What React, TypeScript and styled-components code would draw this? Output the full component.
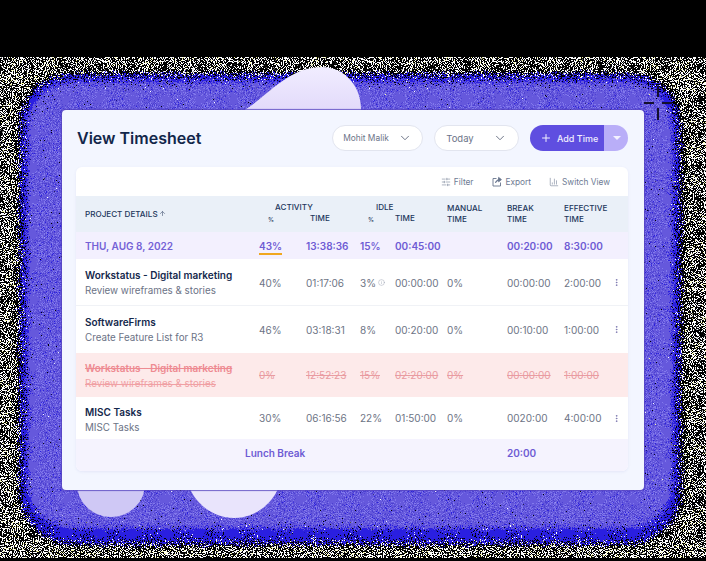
import styled, { createGlobalStyle } from "styled-components";
import { Plus, ChevronDown, SlidersHorizontal, ChartColumn, ArrowUp, Info, EllipsisVertical } from "lucide-react";

const GlobalStyle = createGlobalStyle`
  html, body {
    margin: 0;
    padding: 0;
    background: #000;
    font-family: Inter, "Noto Sans", sans-serif;
  }
`;

interface RowData {
  title: string;
  sub: string;
  values: string[];
  info?: boolean;
  removed?: boolean;
  height: number;
  nudge?: number;
}

const rows: RowData[] = [
  {
    title: "Workstatus - Digital marketing",
    sub: "Review wireframes & stories",
    values: ["40%", "01:17:06", "3%", "00:00:00", "0%", "00:00:00", "2:00:00"],
    info: true,
    height: 47,
    nudge: 1,
  },
  {
    title: "SoftwareFirms",
    sub: "Create Feature List for R3",
    values: ["46%", "03:18:31", "8%", "00:20:00", "0%", "00:10:00", "1:00:00"],
    height: 47,
    nudge: 1,
  },
  {
    title: "Workstatus - Digital marketing",
    sub: "Review wireframes & stories",
    values: ["0%", "12:52:23", "15%", "02:20:00", "0%", "00:00:00", "1:00:00"],
    removed: true,
    height: 44,
    nudge: 1,
  },
  {
    title: "MISC Tasks",
    sub: "MISC Tasks",
    values: ["30%", "06:16:56", "22%", "01:50:00", "0%", "0020:00", "4:00:00"],
    height: 42,
    nudge: 4,
  },
];

// thresholded noise: offset -1 keeps about half the pixels where the shape is solid
function Dither({ id, blur, gain = 1, offset, color, seed }: { id: string; blur: number; gain?: number; offset: number; color: string; seed: number }) {
  return (
    <filter id={id} x="-20%" y="-20%" width="140%" height="140%" colorInterpolationFilters="sRGB">
      <feGaussianBlur in="SourceAlpha" stdDeviation={blur} result="soft" />
      <feTurbulence type="fractalNoise" baseFrequency="0.97" numOctaves="2" seed={seed} result="noise" />
      <feComposite in="soft" in2="noise" operator="arithmetic" k1="0" k2={gain} k3="1" k4={offset} result="mix" />
      <feComponentTransfer in="mix" result="hard">
        <feFuncA type="linear" slope="60" intercept="-30" />
      </feComponentTransfer>
      <feFlood floodColor={color} />
      <feComposite in2="hard" operator="in" />
    </filter>
  );
}

function Backdrop() {
  return (
    <BackdropSvg viewBox="0 0 706 561">
      <defs>
        <Dither id="whiteSpeck" blur={0.01} offset={-1.02} color="#ffffff" seed={4} />
        <Dither id="yellowSpeck" blur={0.01} offset={-1.2} color="#f6f7a0" seed={11} />
        <Dither id="blackGap" blur={10} offset={-0.92} color="#000000" seed={21} />
        <Dither id="blueSpeck" blur={7} offset={-0.86} color="#2a1fe0" seed={7} />
        <Dither id="purpleFill" blur={7} offset={-0.8} color="#6558dc" seed={9} />
        <Dither id="lightGrain" blur={3} offset={-1.08} color="#8279ec" seed={15} />
        <Dither id="darkGrain" blur={3} offset={-1.1} color="#4c40d2" seed={17} />
        <linearGradient id="blobTop" x1="0" y1="0" x2="0" y2="1">
          <stop offset="0" stopColor="#f1edff" />
          <stop offset="1" stopColor="#e2dafa" />
        </linearGradient>
      </defs>
      <rect x="-40" y="57" width="790" height="501" fill="#fff" filter="url(#whiteSpeck)" />
      <rect x="-40" y="57" width="790" height="501" fill="#fff" filter="url(#yellowSpeck)" />
      <rect x="6" y="62" width="690" height="494" rx="66" fill="#000" filter="url(#blackGap)" />
      <rect x="14" y="68" width="672" height="482" rx="58" fill="#000" filter="url(#blueSpeck)" />
      <rect x="22" y="76" width="656" height="458" rx="50" fill="#000" filter="url(#purpleFill)" />
      <rect x="26" y="80" width="648" height="450" rx="46" fill="#000" filter="url(#lightGrain)" />
      <rect x="26" y="80" width="648" height="450" rx="46" fill="#000" filter="url(#darkGrain)" />
      <path d="M243 111C268 96 288 67 322 67C346 67 362 88 361 111Z" fill="url(#blobTop)" />
      <ellipse cx="111" cy="484" rx="34" ry="33" fill="#cfc8f5" />
      <ellipse cx="234" cy="466" rx="49" ry="52" fill="#e9e4fc" />
      <path d="M644 103H654M662 103H672M658 86V97M658 108V120" stroke="#14102e" strokeWidth="2" fill="none" />
    </BackdropSvg>
  );
}

function ExportIcon() {
  return (
    <svg width="11" height="11" viewBox="0 0 11 11" fill="none" stroke="#66748c" strokeWidth="0.9">
      <path d="M4.5 2.5H1V10H8.5V6.5" />
      <path d="M3.5 7C3.8 4.8 5.4 3.6 7.6 3.6M6.6 1.4L9.4 3.6L6.6 5.8Z" fill="#66748c" />
    </svg>
  );
}

export default function App() {
  return (
    <Page>
      <GlobalStyle />
      <Backdrop />
      <Card>
        <CardHeader>
          <Title>View Timesheet</Title>
          <Select $width={91} $size={8.4} $gap={9}>
            Mohit Malik
            <ChevronDown size={14} strokeWidth={1.5} />
          </Select>
          <Select $width={85} $size={9.5} $gap={19}>
            Today
            <ChevronDown size={14} strokeWidth={1.5} />
          </Select>
          <AddButton>
            <AddMain>
              <Plus size={12} strokeWidth={2} />
              Add Time
            </AddMain>
            <AddCaret>
              <Caret />
            </AddCaret>
          </AddButton>
        </CardHeader>
        <Panel>
          <Toolbar>
            <ToolItem>
              <SlidersHorizontal size={10} strokeWidth={1.3} />
              Filter
            </ToolItem>
            <ToolItem>
              <ExportIcon />
              Export
            </ToolItem>
            <ToolItem>
              <ChartColumn size={10} strokeWidth={1.3} />
              Switch View
            </ToolItem>
          </Toolbar>

          <HeadRow>
            <HeadCell>
              PROJECT DETAILS
              <ArrowUp size={7} strokeWidth={2.4} />
            </HeadCell>
            <HeadGroup>
              <GroupLabel $inset={16}>ACTIVITY</GroupLabel>
              <TinyLabel $inset={9}>%</TinyLabel>
              <SubLabel $inset={4}>TIME</SubLabel>
            </HeadGroup>
            <HeadGroup>
              <GroupLabel $inset={16}>IDLE</GroupLabel>
              <TinyLabel $inset={8}>%</TinyLabel>
              <SubLabel $inset={0}>TIME</SubLabel>
            </HeadGroup>
            <HeadCell>
              MANUAL
              <br />
              TIME
            </HeadCell>
            <HeadCell>
              BREAK
              <br />
              TIME
            </HeadCell>
            <HeadCell>
              EFFECTIVE
              <br />
              TIME
            </HeadCell>
          </HeadRow>

          <DateRow>
            <DateLabel>THU, AUG 8, 2022</DateLabel>
            <Underlined>43%</Underlined>
            <DateValue>13:38:36</DateValue>
            <DateValue>15%</DateValue>
            <DateValue>00:45:00</DateValue>
            <DateValue />
            <DateValue>00:20:00</DateValue>
            <DateValue>8:30:00</DateValue>
          </DateRow>

          {rows.map((row, i) => (
            <DataRow key={i} $height={row.height} $removed={row.removed} $line={i === 0}>
              <Project $nudge={row.nudge ?? 0}>
                <ProjectTitle $removed={row.removed}>{row.title}</ProjectTitle>
                <ProjectSub $removed={row.removed}>{row.sub}</ProjectSub>
              </Project>
              {row.values.map((v, j) => (
                <Value key={j} $removed={row.removed}>
                  {v}
                  {row.info && j === 2 && <Info size={7} strokeWidth={1.4} />}
                </Value>
              ))}
              {!row.removed && (
                <MoreCell>
                  <EllipsisVertical size={9} strokeWidth={2} />
                </MoreCell>
              )}
            </DataRow>
          ))}

          <LunchRow>
            <LunchLabel>Lunch Break</LunchLabel>
            <DateValue>20:00</DateValue>
          </LunchRow>
        </Panel>
      </Card>
    </Page>
  );
}

const columns = "174px 47px 54px 35px 52px 60px 57px 48px 1fr";

const Page = styled.div`
  position: relative;
  width: 706px;
  height: 561px;
  overflow: hidden;
  background: #000;
  padding: 110px 0 0 62px;
  box-sizing: border-box;
`;

const BackdropSvg = styled.svg`
  position: absolute;
  inset: 0;
  width: 706px;
  height: 561px;
`;

const Card = styled.div`
  position: relative;
  width: 582px;
  height: 380px;
  box-sizing: border-box;
  padding: 15px 16px 0 14px;
  background: #f3f6ff;
  border-radius: 4px;
  box-shadow: 0 0 1px 0.5px rgba(84, 66, 190, 0.8);
`;

const CardHeader = styled.div`
  display: flex;
  align-items: center;
  height: 26px;
  margin-bottom: 16px;
`;

const Title = styled.h1`
  flex: 1;
  margin: 0 0 0 1px;
  font-size: 16px;
  font-weight: 600;
  color: #12264a;
`;

const Select = styled.div<{ $width: number; $size: number; $gap: number }>`
  display: flex;
  align-items: center;
  justify-content: center;
  gap: ${(p) => p.$gap}px;
  width: ${(p) => p.$width}px;
  height: 26px;
  margin-right: 11px;
  box-sizing: border-box;
  background: #fff;
  border: 1px solid #e2e5ef;
  border-radius: 13px;
  font-size: ${(p) => p.$size}px;
  color: #6c7488;
  svg {
    color: #5c6478;
  }
`;

const AddButton = styled.div`
  display: flex;
  width: 98px;
  height: 26px;
  border-radius: 13px;
  overflow: hidden;
`;

const AddMain = styled.div`
  flex: 1;
  display: flex;
  align-items: center;
  gap: 5px;
  padding-left: 10px;
  background: #5f4ee0;
  color: #f1effe;
  font-size: 9px;
  font-weight: 500;
`;

const AddCaret = styled.div`
  display: flex;
  align-items: center;
  justify-content: center;
  width: 24px;
  background: #b9aef8;
`;

const Caret = styled.span`
  width: 0;
  height: 0;
  margin-left: 2px;
  border-left: 4.5px solid transparent;
  border-right: 4.5px solid transparent;
  border-top: 4.5px solid #f4f2ff;
`;

const Panel = styled.div`
  height: 304px;
  background: #fff;
  border-radius: 6px;
  overflow: hidden;
  box-shadow: 0 1px 3px rgba(120, 120, 200, 0.12);
`;

const Toolbar = styled.div`
  display: flex;
  justify-content: flex-end;
  align-items: center;
  gap: 18px;
  height: 29px;
  padding-right: 18px;
`;

const ToolItem = styled.div`
  display: flex;
  align-items: center;
  gap: 3px;
  font-size: 8.3px;
  color: #6d7a92;
  svg {
    color: #66748c;
  }
`;

const HeadRow = styled.div`
  display: grid;
  grid-template-columns: ${columns};
  align-items: center;
  height: 36px;
  padding-left: 9px;
  background: #eaf0f8;
`;

const HeadCell = styled.div`
  font-size: 8.1px;
  line-height: 11px;
  font-weight: 500;
  color: #22375c;
  svg {
    margin-left: 1px;
    color: #5c6a85;
  }
`;

const HeadGroup = styled.div`
  grid-column: span 2;
  display: grid;
  grid-template-columns: subgrid;
  font-size: 8.1px;
  line-height: 11px;
  font-weight: 500;
  color: #22375c;
`;

const GroupLabel = styled.div<{ $inset: number }>`
  grid-column: 1 / -1;
  padding-left: ${(p) => p.$inset}px;
`;

const SubLabel = styled.div<{ $inset: number }>`
  padding-left: ${(p) => p.$inset}px;
`;

const TinyLabel = styled(SubLabel)`
  font-size: 6px;
  line-height: 13px;
`;

const DateRow = styled.div`
  display: grid;
  grid-template-columns: ${columns};
  align-items: center;
  height: 27px;
  padding-left: 9px;
  background: #f3f0fe;
`;

const DateLabel = styled.div`
  font-size: 10px;
  font-weight: 600;
  color: #7461d6;
`;

const DateValue = styled.div`
  font-size: 10px;
  font-weight: 600;
  color: #6e5bd4;
`;

const Underlined = styled(DateValue)`
  justify-self: start;
  padding: 1px 0 1px;
  border-bottom: 2px solid #f0a71f;
  margin-top: 3px;
`;

const DataRow = styled.div<{ $height: number; $removed?: boolean; $line?: boolean }>`
  display: grid;
  grid-template-columns: ${columns};
  align-items: center;
  height: ${(p) => p.$height}px;
  padding-left: 9px;
  background: ${(p) => (p.$removed ? "#fdeaea" : "#fff")};
  box-shadow: ${(p) => (p.$line ? "inset 0 -1px 0 #f0f2f6" : "none")};
`;

const Project = styled.div<{ $nudge: number }>`
  display: flex;
  flex-direction: column;
  gap: 4px;
  margin-top: ${(p) => p.$nudge}px;
`;

const ProjectTitle = styled.div<{ $removed?: boolean }>`
  font-size: 10px;
  line-height: 12px;
  font-weight: 600;
  color: ${(p) => (p.$removed ? "#ee8b92" : "#14284c")};
  text-decoration: ${(p) => (p.$removed ? "line-through" : "none")};
  white-space: nowrap;
`;

const ProjectSub = styled.div<{ $removed?: boolean }>`
  font-size: 9.8px;
  line-height: 12px;
  color: ${(p) => (p.$removed ? "#f0a0a4" : "#6b7285")};
  text-decoration: ${(p) => (p.$removed ? "line-through" : "none")};
  white-space: nowrap;
`;

const Value = styled.div<{ $removed?: boolean }>`
  display: flex;
  align-items: center;
  gap: 2px;
  font-size: 10px;
  color: ${(p) => (p.$removed ? "#e99ba1" : "#6d7485")};
  text-decoration: ${(p) => (p.$removed ? "line-through" : "none")};
  svg {
    color: #8f96a8;
  }
`;

const MoreCell = styled.div`
  display: flex;
  color: #6f6aa8;
`;

const LunchRow = styled.div`
  display: grid;
  grid-template-columns: 422px 1fr;
  align-items: center;
  height: 32px;
  box-sizing: border-box;
  padding: 0 0 4px 9px;
  background: #f5f3fe;
`;

const LunchLabel = styled(DateValue)`
  padding-left: 160px;
`;
